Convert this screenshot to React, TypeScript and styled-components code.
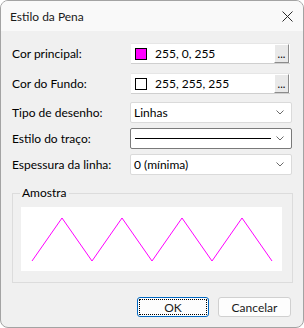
import React from "react";
import styled, { createGlobalStyle } from "styled-components";

const GlobalStyle = createGlobalStyle`
  html, body {
    margin: 0;
    padding: 0;
    background: #ffffff;
  }
  body {
    font-family: "Lato", "Liberation Sans", sans-serif;
    font-size: 12px;
    color: #000;
  }
`;

const Window = styled.div`
  width: 304px;
  height: 328px;
  box-sizing: border-box;
  border: 1px solid #a3a3a3;
  border-radius: 8px;
  overflow: hidden;
  display: flex;
  flex-direction: column;
  background: #f0f0f0;
`;

const TitleBar = styled.div`
  height: 30px;
  flex-shrink: 0;
  display: flex;
  align-items: center;
  justify-content: space-between;
  padding: 0 10px 0 9px;
  background: #f9f9f9;
  font-size: 12px;
  color: #1a1a1a;
`;

const Body = styled.div`
  flex: 1;
  display: flex;
  flex-direction: column;
  padding: 12px 11px 0 11px;
`;

const FieldGroup = styled.div<{ $gap: number; $top?: number }>`
  display: flex;
  flex-direction: column;
  gap: ${(p) => p.$gap}px;
  margin-top: ${(p) => p.$top ?? 0}px;
`;

const Row = styled.div`
  display: flex;
  align-items: center;
`;

const Label = styled.div`
  width: 119px;
  flex-shrink: 0;
`;

const ColorField = styled.div`
  width: 159px;
  height: 21px;
  box-sizing: border-box;
  margin-left: 0;
  background: #fff;
  border-top: 1px solid #e6e6e6;
  border-bottom: 1px solid #cfcfcf;
  display: flex;
  align-items: center;
  padding-left: 4px;
  padding-right: 1px;
`;

const Swatch = styled.div<{ $color: string }>`
  width: 12px;
  height: 12px;
  box-sizing: border-box;
  border: 1px solid #000;
  background: ${(p) => p.$color};
  margin-right: 8px;
`;

const ColorValue = styled.span`
  flex: 1;
`;

const DotsButton = styled.div`
  width: 15px;
  height: 19px;
  box-sizing: border-box;
  background: #e9e9e9;
  border-top: 1px solid #ffffff;
  border-left: 1px solid #ffffff;
  border-right: 1px solid #8c8c8c;
  border-bottom: 1px solid #8c8c8c;
  display: flex;
  align-items: flex-end;
  justify-content: center;
  padding-bottom: 4px;
  font-size: 11px;
  line-height: 8px;
`;

const Select = styled.div<{ $focused?: boolean }>`
  width: 162px;
  height: 21px;
  box-sizing: border-box;
  margin-left: -1px;
  background: #fff;
  border: 1px solid ${(p) => (p.$focused ? "#7a7a7a" : "#dadada")};
  border-radius: 2px;
  display: flex;
  align-items: center;
  padding: 0 7px 0 3px;
`;

const SelectValue = styled.div`
  flex: 1;
  display: flex;
  align-items: center;
`;

const DashLine = styled.div`
  height: 1px;
  width: 136px;
  background: #000;
  margin-left: 1px;
`;

const Chevron = () => (
  <svg width="8" height="5" viewBox="0 0 8 5">
    <path d="M0.5 0.5 L4 4 L7.5 0.5" fill="none" stroke="#6b6b6b" strokeWidth="1" />
  </svg>
);

const CloseIcon = () => (
  <svg width="11" height="11" viewBox="0 0 11 11">
    <path d="M0.5 0.5 L10.5 10.5 M10.5 0.5 L0.5 10.5" stroke="#2b2b2b" strokeWidth="1" />
  </svg>
);

const GroupBox = styled.div`
  position: relative;
  margin-top: 18px;
  width: 281px;
  height: 90px;
  box-sizing: border-box;
  border: 1px solid #dcdcdc;
  padding: 13px 9px 0 8px;
`;

const Legend = styled.span`
  position: absolute;
  top: -8px;
  left: 7px;
  padding: 0 2px;
  background: #f0f0f0;
  line-height: 14px;
`;

const Preview = styled.div`
  width: 261px;
  height: 64px;
  background: #fff;
`;

const Footer = styled.div`
  display: flex;
  justify-content: flex-end;
  gap: 9px;
  margin-top: 14px;
  padding-right: 1px;
`;

const Button = styled.div<{ $primary?: boolean }>`
  position: relative;
  width: ${(p) => (p.$primary ? 72 : 73)}px;
  height: 20px;
  box-sizing: border-box;
  border: 1px solid ${(p) => (p.$primary ? "#0067c0" : "#d0d0d0")};
  border-radius: 3px;
  background: #fdfdfd;
  display: flex;
  align-items: center;
  justify-content: center;
  color: #1a1a1a;
`;

const FocusRing = styled.div`
  position: absolute;
  inset: 1px;
  border: 1px dotted #000;
  border-radius: 1px;
`;

const zigzag = [
  [11, 54], [41, 11], [71, 54], [101, 11], [131, 54],
  [161, 11], [191, 54], [221, 11], [251, 54],
];

export default function App() {
  return (
    <>
      <GlobalStyle />
      <Window>
        <TitleBar>
          <span>Estilo da Pena</span>
          <CloseIcon />
        </TitleBar>
        <Body>
          <FieldGroup $gap={9}>
            <Row>
              <Label>Cor principal:</Label>
              <ColorField>
                <Swatch $color="#ff00ff" />
                <ColorValue>255, 0, 255</ColorValue>
                <DotsButton>...</DotsButton>
              </ColorField>
            </Row>
            <Row>
              <Label>Cor do Fundo:</Label>
              <ColorField>
                <Swatch $color="#ffffff" />
                <ColorValue>255, 255, 255</ColorValue>
                <DotsButton>...</DotsButton>
              </ColorField>
            </Row>
          </FieldGroup>
          <FieldGroup $gap={5} $top={8}>
            <Row>
              <Label>Tipo de desenho:</Label>
              <Select>
                <SelectValue>Linhas</SelectValue>
                <Chevron />
              </Select>
            </Row>
            <Row>
              <Label>Estilo do traço:</Label>
              <Select $focused>
                <SelectValue>
                  <DashLine />
                </SelectValue>
                <Chevron />
              </Select>
            </Row>
            <Row>
              <Label>Espessura da linha:</Label>
              <Select>
                <SelectValue>0 (mínima)</SelectValue>
                <Chevron />
              </Select>
            </Row>
          </FieldGroup>
          <GroupBox>
            <Legend>Amostra</Legend>
            <Preview>
              <svg width="261" height="64" viewBox="0 0 261 64">
                <polyline
                  points={zigzag.map((p) => p.join(",")).join(" ")}
                  fill="none"
                  stroke="#ff00ff"
                  strokeWidth="1"
                />
              </svg>
            </Preview>
          </GroupBox>
          <Footer>
            <Button $primary>
              <FocusRing />
              OK
            </Button>
            <Button>Cancelar</Button>
          </Footer>
        </Body>
      </Window>
    </>
  );
}
